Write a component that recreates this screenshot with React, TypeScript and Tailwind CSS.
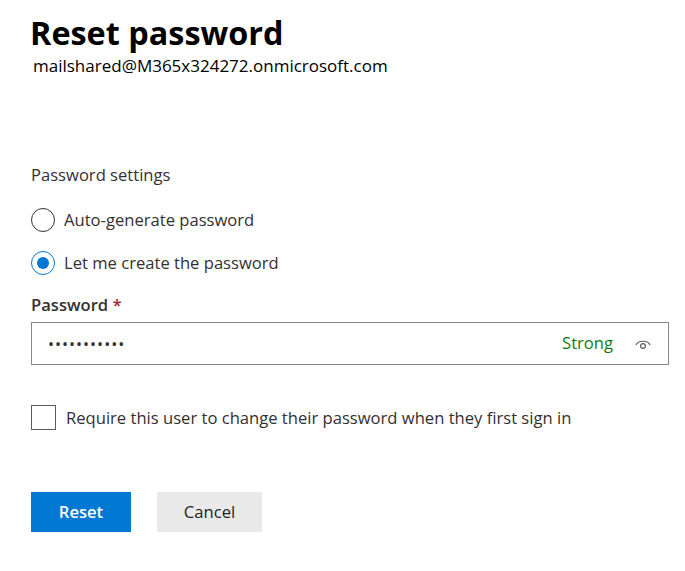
import React from "react";

export default function App() {
  return (
    <div
      className="w-[685px] h-[571px] bg-white pl-[31px] overflow-hidden"
      style={{ fontFamily: '"Open Sans", "Noto Sans", sans-serif' }}
    >
      <h1 className="pt-[12px] text-[32.4px] leading-[40px] font-bold text-black -ml-[1px]">
        Reset password
      </h1>
      <div className="mt-[3px] ml-[2px] text-[17px] leading-[22px] text-black">
        mailshared@M365x324272.onmicrosoft.com
      </div>

      <div className="mt-[87px] text-[16.6px] leading-[22px] text-[#323130]">
        Password settings
      </div>

      <div className="mt-[22px] flex flex-col gap-[19px]">
        <label className="flex items-center gap-[9px] h-[24px]">
          <span className="w-[24px] h-[24px] rounded-full border border-[#323130] bg-white" />
          <span className="text-[16.6px] leading-[22px] text-[#323130]">Auto-generate password</span>
        </label>
        <label className="flex items-center gap-[9px] h-[24px]">
          <span className="w-[24px] h-[24px] rounded-full border border-[#0078d4] bg-white flex items-center justify-center">
            <span className="w-[12px] h-[12px] rounded-full bg-[#0078d4]" />
          </span>
          <span className="text-[16.6px] leading-[22px] text-[#323130]">Let me create the password</span>
        </label>
      </div>

      <div className="mt-[19px] text-[16.6px] leading-[22px] font-semibold text-[#323130]">
        Password <span className="text-[#a4262c]">*</span>
      </div>

      <div className="mt-[6px] w-[638px] h-[43px] border border-[#8a8886] flex items-center pl-[16px] pr-[16px]">
        <span className="text-[16px] tracking-[1px] text-[#323130] flex-1">•••••••••••</span>
        <span className="text-[16.6px] text-[#107c10] mr-[21px]">Strong</span>
        <svg width="18" height="14" viewBox="0 0 18 14" fill="none">
          <path d="M2 8 C4 3 14 3 16 8" stroke="#605e5c" strokeWidth="1.2" fill="none" />
          <circle cx="9" cy="9" r="2.4" stroke="#605e5c" strokeWidth="1.2" fill="none" />
        </svg>
      </div>

      <label className="mt-[40px] flex items-center gap-[10px] h-[25px]">
        <span className="w-[25px] h-[25px] border border-[#605e5c] bg-white" />
        <span className="text-[16.6px] leading-[22px] text-[#323130]">
          Require this user to change their password when they first sign in
        </span>
      </label>

      <div className="mt-[62px] flex gap-[26px]">
        <button className="w-[100px] h-[40px] bg-[#0078d4] text-white text-[16.6px] font-semibold">
          Reset
        </button>
        <button className="w-[105px] h-[40px] bg-[#e9e9e9] text-[#201f1e] text-[16.6px]">
          Cancel
        </button>
      </div>
    </div>
  );
}
